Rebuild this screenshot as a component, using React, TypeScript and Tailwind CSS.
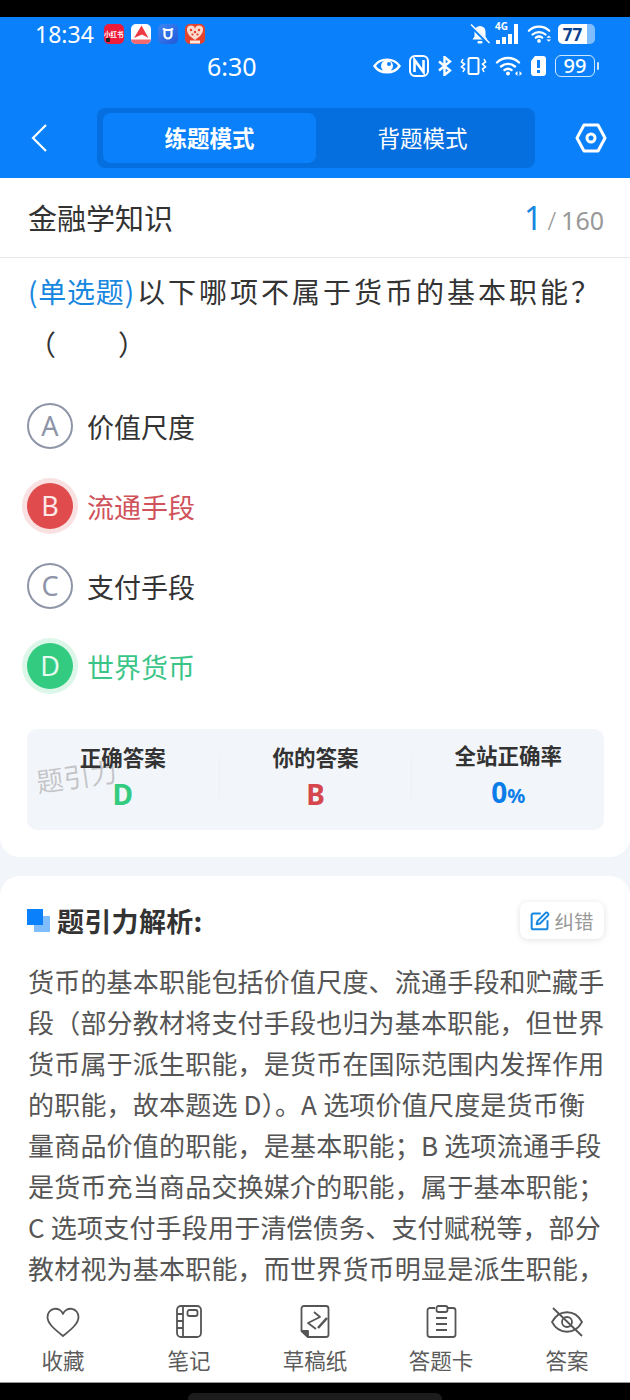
const font = "font-['Noto_Sans_CJK_SC','Noto_Sans',sans-serif]";

function AppIcons() {
  return (
    <div className="flex items-center gap-[7px] ml-[10px]">
      <div className="relative w-[20px] h-[20px] rounded-[5px] bg-[#ee1c3a] flex items-center justify-center text-[6.5px] leading-none font-bold text-white">
        小红书
        <div className="absolute left-[2px] bottom-[2px] w-[4px] h-[4px] rounded-[1px] bg-[#222]" />
      </div>
      <div className="w-[20px] h-[20px] rounded-[5px] bg-white overflow-hidden">
        <svg width="20" height="20" viewBox="0 0 20 20">
          <path d="M10.5 1.5 L17.5 14 L11 10.5 L3 14 Z" fill="#ee3a42" />
          <rect x="0" y="15.5" width="20" height="4.5" fill="#f26a70" />
        </svg>
      </div>
      <div className="w-[20px] h-[20px] rounded-[5px] bg-gradient-to-br from-[#3d86f2] to-[#2458d8] flex items-center justify-center">
        <svg width="14" height="14" viewBox="0 0 14 14" fill="none" stroke="white" strokeWidth="2.2">
          <path d="M2 1.5 Q3.5 3 7 3 Q10.5 3 12 1.5 M3.5 3 v5 a3.5 3.5 0 0 0 7 0 v-5" />
        </svg>
      </div>
      <div className="w-[20px] h-[20px] rounded-[5px] bg-[#e5432c] overflow-hidden">
        <svg width="20" height="20" viewBox="0 0 20 20">
          <path d="M10 16 C3 11.5 2 8 2 6 a4 4 0 0 1 8 -1 a4 4 0 0 1 8 1 c0 2 -1 5.5 -8 10 Z" fill="#fbd9cc" />
          <circle cx="6" cy="6" r="1.2" fill="#e5432c" />
          <circle cx="10" cy="8" r="1.2" fill="#e5432c" />
          <circle cx="14" cy="6" r="1.2" fill="#e5432c" />
          <circle cx="7.5" cy="10.5" r="1.1" fill="#e5432c" />
          <circle cx="12.5" cy="10.5" r="1.1" fill="#e5432c" />
          <rect x="5" y="16.5" width="10" height="3" fill="#fbe9dc" />
        </svg>
      </div>
    </div>
  );
}

function Wifi({ width = 25, suffix }: { width?: number; suffix: 'updown' | 'leftright' }) {
  return (
    <svg width={width} height="20" viewBox="0 0 27 20" fill="none" stroke="white" strokeWidth="2.4" strokeLinecap="round">
      <path d="M2 6.5 C8 0.5 18 0.5 24 6.5" />
      <path d="M6 10.5 C10 7 16 7 20 10.5" />
      <path d="M9.5 14 C11.5 12.5 14.5 12.5 16.5 14" />
      <circle cx="13" cy="17.5" r="2" fill="white" stroke="none" />
      {suffix === 'updown' ? (
        <path d="M21 14 l2.5 -2.5 l2.5 2.5 Z M21 16 l2.5 2.5 l2.5 -2.5 Z" fill="white" stroke="none" />
      ) : (
        <path d="M20 17.5 l2.5 -2.5 v5 Z M27 17.5 l-2.5 -2.5 v5 Z" fill="white" stroke="none" />
      )}
    </svg>
  );
}

function StatusBar() {
  return (
    <div className="text-white">
      <div className="h-[34px] flex items-center justify-between pl-[35px] pr-[35px]">
        <div className="flex items-center">
          <span className="text-[23px] leading-none font-['Noto_Sans',sans-serif]">18:34</span>
          <AppIcons />
        </div>
        <div className="flex items-center">
          <svg width="20" height="20" viewBox="0 0 20 20" fill="white">
            <path d="M10 2 a5.5 5.5 0 0 1 5.5 5.5 v5 l2 3 H2.5 l2 -3 V7.5 A5.5 5.5 0 0 1 10 2 Z" />
            <rect x="7.5" y="17" width="5" height="2.5" rx="1" />
            <path d="M1 2 L18 19" stroke="#0a81fb" strokeWidth="3.2" />
            <path d="M1 0.5 L19.5 19" stroke="white" strokeWidth="1.5" />
          </svg>
          <div className="relative ml-[5px] w-[25px] h-[20px]">
            <span className="absolute left-0 top-[-3px] text-[10px] leading-[10px] font-bold font-['Noto_Sans',sans-serif]">4G</span>
            <div className="absolute left-[1px] bottom-0 flex items-end gap-[2px]">
              <div className="w-[4px] h-[4px] bg-white" />
              <div className="w-[4px] h-[7px] bg-white" />
              <div className="w-[4px] h-[10px] bg-white" />
              <div className="w-[4px] h-[20px] bg-white" />
            </div>
          </div>
          <div className="ml-[7px] flex">
            <Wifi suffix="updown" />
          </div>
          <div className="ml-[6px] w-[37px] h-[20px] rounded-[5px] bg-[#7fbdfd] overflow-hidden">
            <div className="h-full w-[29px] bg-white flex items-center justify-center text-[17px] leading-none font-bold text-[#0b3f8f] font-['Noto_Sans',sans-serif]">
              77
            </div>
          </div>
        </div>
      </div>
      <div className="h-[30px] flex items-center justify-between pl-[207px] pr-[35px]">
        <span className="text-[25px] leading-none font-['Noto_Sans',sans-serif]">6:30</span>
        <div className="flex items-center gap-[8px]">
          <svg width="28" height="20" viewBox="0 0 28 20" fill="none">
            <path d="M1.5 10 C7 1.5 21 1.5 26.5 10 C21 18.5 7 18.5 1.5 10 Z" stroke="white" strokeWidth="2.4" />
            <circle cx="14" cy="10" r="6" fill="white" />
            <circle cx="16" cy="8" r="2" fill="#0a81fb" />
          </svg>
          <svg width="20" height="22" viewBox="0 0 20 22" fill="none" stroke="white" strokeWidth="2">
            <rect x="1" y="1" width="18" height="20" rx="5" />
            <path d="M5.5 17 V5 L14.5 17 V5" strokeWidth="2.6" />
          </svg>
          <svg width="15" height="20" viewBox="0 0 15 20" fill="none" stroke="white" strokeWidth="2.4">
            <path d="M2 5.5 L13 14.5 L7.5 19 V1 L13 5.5 L2 14.5" />
          </svg>
          <svg width="27" height="20" viewBox="0 0 27 20" fill="none" stroke="white" strokeWidth="2">
            <rect x="8.5" y="2" width="10" height="16" rx="1.5" />
            <path d="M3 3 L1.5 6 L4.5 8 L1.5 11 L4.5 13 L3 16 M24 3 L25.5 6 L22.5 8 L25.5 11 L22.5 13 L24 16" strokeWidth="1.6" />
          </svg>
          <Wifi width={27} suffix="leftright" />
          <svg width="17" height="22" viewBox="0 0 17 22">
            <path d="M5 1 H13 a3 3 0 0 1 3 3 V18 a3 3 0 0 1 -3 3 H4 a3 3 0 0 1 -3 -3 V6 Z" fill="white" />
            <rect x="7" y="5" width="3" height="8" fill="#0a81fb" />
            <rect x="7" y="15" width="3" height="3" fill="#0a81fb" />
          </svg>
          <div className="flex items-center gap-[2px] -mr-[4px]">
            <div className="w-[40px] h-[22px] rounded-[6px] border-[1.5px] border-white/80 flex items-center justify-center text-[20px] leading-none font-medium font-['Noto_Sans',sans-serif]">
              99
            </div>
            <div className="w-[2px] h-[8px] rounded-full bg-white/80" />
          </div>
        </div>
      </div>
    </div>
  );
}

function TopBar() {
  return (
    <div className="mt-[27px] h-[60px] flex items-center pl-[30px]">
      <svg width="20" height="30" viewBox="0 0 20 30" fill="none" stroke="white" strokeWidth="2.2">
        <path d="M16 2 L3 15 L16 28" />
      </svg>
      <div className="ml-[47px] w-[438px] h-[60px] rounded-[8px] bg-[#066fdf] flex items-stretch py-[5px] pl-[6px] text-[22.5px] text-white">
        <div className="w-[213px] rounded-[8px] bg-[#0a81fb] flex items-center justify-center font-bold">练题模式</div>
        <div className="flex-1 flex items-center justify-center pr-[6px]">背题模式</div>
      </div>
      <svg className="ml-[40px]" width="32" height="30" viewBox="0 0 32 30" fill="none" stroke="white" strokeWidth="3" strokeLinejoin="round">
        <path d="M9 2 H23 L30 15 L23 28 H9 L2 15 Z" />
        <circle cx="16" cy="15" r="4" />
      </svg>
    </div>
  );
}

const options = [
  { letter: 'A', text: '价值尺度', state: 'normal' },
  { letter: 'B', text: '流通手段', state: 'wrong' },
  { letter: 'C', text: '支付手段', state: 'normal' },
  { letter: 'D', text: '世界货币', state: 'right' },
];

function Option({ letter, text, state }: { letter: string; text: string; state: string }) {
  return (
    <div className="h-[80px] flex items-center">
      {state === 'normal' && (
        <div className="w-[46px] h-[46px] rounded-full border-2 border-[#8f95a8] flex items-center justify-center text-[27px] text-[#8f95a8] font-['Noto_Sans',sans-serif]">
          {letter}
        </div>
      )}
      {state === 'wrong' && (
        <div className="w-[46px] h-[46px] rounded-full bg-[#e04c4e] ring-[5px] ring-[#f9e1e2] flex items-center justify-center text-[27px] text-[#fde8e8] font-['Noto_Sans',sans-serif]">
          {letter}
        </div>
      )}
      {state === 'right' && (
        <div className="w-[46px] h-[46px] rounded-full bg-[#33cb80] ring-[5px] ring-[#dcf6e9] flex items-center justify-center text-[27px] text-[#e6faf0] font-['Noto_Sans',sans-serif]">
          {letter}
        </div>
      )}
      <span
        className={`ml-[14px] text-[27px] leading-none ${
          state === 'wrong' ? 'text-[#d0525a]' : state === 'right' ? 'text-[#3bc587]' : 'text-[#333]'
        }`}
      >
        {text}
      </span>
    </div>
  );
}

function AnswerStats() {
  return (
    <div className="relative ml-[27px] mr-[26px] mt-[23px] h-[101px] rounded-[10px] bg-[#f2f5f9] flex items-center pb-[5px]">
      <div className="flex-1 flex flex-col items-center">
        <span className="mb-[4px] text-[21.5px] leading-[30px] font-bold text-[#333]">正确答案</span>
        <span className="text-[28px] leading-[36px] font-bold text-[#33cb80] font-['Noto_Sans',sans-serif]">D</span>
      </div>
      <div className="w-px h-[44px] bg-[#edf0f4]" />
      <div className="flex-1 flex flex-col items-center">
        <span className="mb-[4px] text-[21.5px] leading-[30px] font-bold text-[#333]">你的答案</span>
        <span className="text-[28px] leading-[36px] font-bold text-[#d5474c] font-['Noto_Sans',sans-serif]">B</span>
      </div>
      <div className="w-px h-[44px] bg-[#edf0f4]" />
      <div className="flex-1 flex flex-col items-center">
        <span className="mb-[4px] text-[21.5px] leading-[30px] font-bold text-[#333]">全站正确率</span>
        <span className="text-[28px] leading-[36px] font-bold text-[#0a7de8] font-['Noto_Sans',sans-serif]">
          0<span className="text-[20px]">%</span>
        </span>
      </div>
      {/* 水印 */}
      <span className="absolute left-[9px] top-[33px] -rotate-[8deg] text-[27px] leading-none text-[#333]/25">题引力</span>
    </div>
  );
}

function Analysis() {
  return (
    <div className="mt-[19px] flex-1 min-h-0 overflow-hidden rounded-t-[20px] bg-white px-[28px] pt-[26px]">
      <div className="h-[37px] flex items-center justify-between">
        <div className="flex items-center">
          <div className="relative w-[23px] h-[23px] ml-[-1px]">
            <div className="absolute right-0 bottom-0 w-[16px] h-[16px] bg-[#7fbdfd]" />
            <div className="absolute left-0 top-0 w-[16px] h-[16px] bg-[#0a81fb]" />
          </div>
          <span className="ml-[7px] text-[27px] leading-none font-bold tracking-[0.3px] text-[#333]">题引力解析:</span>
        </div>
        <div className="-mr-[2px] w-[84px] h-[37px] rounded-[8px] bg-white shadow-[0_1px_6px_rgba(0,0,0,0.12)] flex items-center justify-center gap-[4px]">
          <svg width="20" height="20" viewBox="0 0 24 24" fill="none" stroke="#1787e0" strokeWidth="2.4" strokeLinecap="round" strokeLinejoin="round">
            <path d="M12 3H4a2 2 0 0 0-2 2v15a2 2 0 0 0 2 2h15a2 2 0 0 0 2-2v-8" />
            <path d="M18.4 2.6a2.1 2.1 0 1 1 3 3L12 15l-4 1 1-4Z" />
          </svg>
          <span className="text-[19.5px] leading-none text-[#999]">纠错</span>
        </div>
      </div>
      <p className="mt-[21px] w-[578px] text-[26px] leading-[41px] tracking-[0.2px] text-[#555]">
        货币的基本职能包括价值尺度、流通手段和贮藏手段（部分教材将支付手段也归为基本职能，但世界货币属于派生职能，是货币在国际范围内发挥作用的职能，故本题选 D）。A 选项价值尺度是货币衡量商品价值的职能，是基本职能；B 选项流通手段是货币充当商品交换媒介的职能，属于基本职能；C 选项支付手段用于清偿债务、支付赋税等，部分教材视为基本职能，而世界货币明显是派生职能，
      </p>
    </div>
  );
}

const navItems = [
  {
    label: '收藏',
    icon: <path d="M18 33 C8 25 2.5 20 2.5 14 a8 8 0 0 1 15.5 -3 a8 8 0 0 1 15.5 3 c0 6 -5.5 11 -15.5 19 Z" />,
  },
  {
    label: '笔记',
    icon: (
      <>
        <rect x="6" y="3" width="24" height="31" rx="4" />
        <path d="M12 3 V34 M6 11 H12 M6 18 H12 M6 25 H12" />
        <rect x="16.5" y="7" width="10" height="6" rx="2" />
      </>
    ),
  },
  {
    label: '草稿纸',
    icon: (
      <>
        <path d="M11 34 H29 a2.5 2.5 0 0 0 2.5 -2.5 V5.5 a2.5 2.5 0 0 0 -2.5 -2.5 H7 a2.5 2.5 0 0 0 -2.5 2.5 V28 Z" />
        <path d="M5 28 H11 V34 Z" fill="#555" />
        <path d="M17 9 L23 14 L11 20 L19 26" />
        <path d="M21 25 L30 15" strokeWidth="2.6" />
      </>
    ),
  },
  {
    label: '答题卡',
    icon: (
      <>
        <path d="M12 5 H7 a2.5 2.5 0 0 0 -2.5 2.5 V31.5 a2.5 2.5 0 0 0 2.5 2.5 H30 a2.5 2.5 0 0 0 2.5 -2.5 V7.5 a2.5 2.5 0 0 0 -2.5 -2.5 H25" />
        <rect x="13.5" y="3" width="11" height="6" rx="2" />
        <path d="M13 15 H24 M13 21 H24 M13 27 H24" />
      </>
    ),
  },
  {
    label: '答案',
    icon: (
      <>
        <path d="M3 19 C10 6 26 6 33 19 C26 32 10 32 3 19 Z" />
        <circle cx="18" cy="19" r="5" />
        <path d="M4 5 L33 33" />
      </>
    ),
  },
];

function BottomNav() {
  return (
    <div className="h-[90px] bg-white border-b border-[#999] flex">
      {navItems.map((item) => (
        <div key={item.label} className="flex-1 flex flex-col items-center pt-[10px]">
          <svg width="36" height="36" viewBox="0 0 36 36" fill="none" stroke="#555" strokeWidth="1.8" strokeLinejoin="round">
            {item.icon}
          </svg>
          <span className="mt-[10px] text-[21.5px] leading-[22px] text-[#5c5c5c]">{item.label}</span>
        </div>
      ))}
    </div>
  );
}

export default function App() {
  return (
    <div className={`${font} w-[630px] h-[1400px] flex flex-col overflow-hidden bg-[#f2f5f9]`}>
      <div className="h-[17px] bg-black" />
      <div className="h-[161px] bg-[#0a81fb]">
        <StatusBar />
        <TopBar />
      </div>

      <div className="bg-white rounded-b-[20px] pb-[27px]">
        <div className="h-[80px] border-b border-[#e6e6e6] flex items-center justify-between pl-[28px] pr-[26px]">
          <span className="text-[29px] leading-none text-[#333]">金融学知识</span>
          <span className="flex items-baseline font-['Noto_Sans',sans-serif] font-light text-[#999]">
            <span className="text-[32px] leading-none font-normal text-[#1787e0]">1</span>
            <span className="ml-[5px] text-[25px] leading-none">/</span>
            <span className="ml-[5px] text-[25px] leading-none font-normal">160</span>
          </span>
        </div>

        <div className="px-[28px] pt-[7px] text-[28px] text-[#333]">
          <div className="leading-[52px] tracking-[3px]">
            <span className="text-[#1787e0] tracking-[0.8px]">(单选题)</span>
            <span className="ml-[2px]">以下哪项不属于货币的基本职能？</span>
          </div>
          <div className="mt-[2px] leading-[50px] tracking-[2px]">（　　）</div>
        </div>

        <div className="px-[27px] mt-[17px]">
          {options.map((o) => (
            <Option key={o.letter} letter={o.letter} text={o.text} state={o.state} />
          ))}
        </div>

        <AnswerStats />
      </div>

      <Analysis />
      <BottomNav />

      <div className="h-[17px] bg-black flex justify-center">
        <div className="mt-[10px] w-[254px] h-[12px] rounded-full bg-[#1c1c1c]" />
      </div>
    </div>
  );
}
